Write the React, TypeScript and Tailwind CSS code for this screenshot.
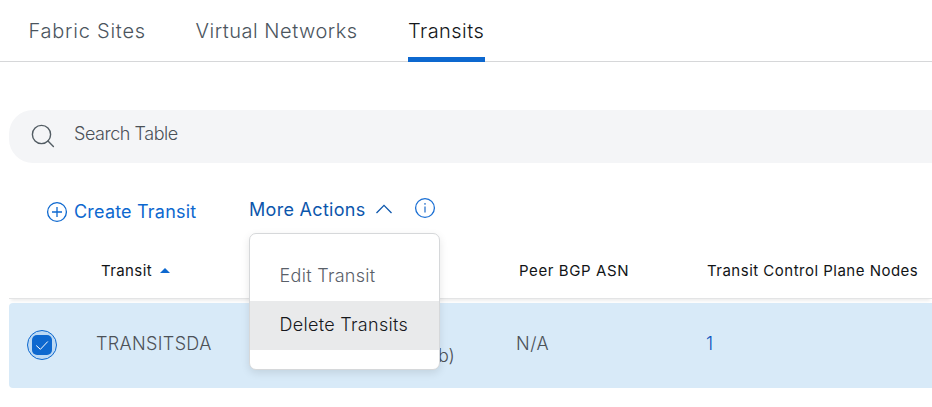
const columns = "grid grid-cols-[88px_421px_188px_1fr]";

function SearchIcon() {
  return (
    <svg className="h-[26px] w-[26px]" viewBox="0 0 26 26" fill="none" stroke="#525c63" strokeWidth="1.4">
      <circle cx="10.5" cy="10.5" r="9.1" />
      <path d="M17 17l5.4 5.4" strokeLinecap="round" />
    </svg>
  );
}

function PlusIcon() {
  return (
    <svg className="h-[22px] w-[22px]" viewBox="0 0 22 22" fill="none" stroke="#0d68cf" strokeWidth="1.3">
      <circle cx="11" cy="11" r="9.4" />
      <path d="M6 11h10M11 6v10" />
    </svg>
  );
}

function InfoIcon() {
  return (
    <svg className="mb-[3px] h-[22px] w-[22px]" viewBox="0 0 22 22" fill="none" stroke="#1a6fd4" strokeWidth="1.3">
      <circle cx="11" cy="11" r="9.4" />
      <path d="M11 9.4v6" stroke="#5f95d8" strokeWidth="1.7" />
      <path d="M11 5.9v1.9" stroke="#5f95d8" strokeWidth="1.7" />
    </svg>
  );
}

function ActionsMenu() {
  return (
    <div className="absolute left-0 top-[47px] z-10 h-[137px] w-[191px] rounded-[7px] border border-[#d6d8da] bg-white pt-[18px] text-lg font-[350] shadow-[0_3px_8px_rgba(0,0,0,0.10)]">
      <div className="flex h-[49px] items-center pb-0.5 pl-[29.5px] tracking-[0.3px] text-[#596069]">Edit Transit</div>
      <div className="flex h-[49px] items-center bg-[#e9eaeb] pb-0.5 pl-[29.5px] tracking-[0.3px] text-[#16181c]">Delete Transits</div>
    </div>
  );
}

export default function App() {
  return (
    <div className="h-[407px] w-full overflow-hidden whitespace-nowrap bg-white font-['Inter',sans-serif]">
      <nav className="flex h-[62px] border-b border-[#d6d7d9] pl-[28px] text-xl font-[340] text-[#4b555e]">
        <div className="w-[167px] pl-[0.5px] pt-[17px] tracking-[0.76px]">Fabric Sites</div>
        <div className="w-[213px] pl-[0.5px] pt-[17px] tracking-[0.52px]">Virtual Networks</div>
        <div className="h-[62px] w-[77px] border-b-5 border-[#0d68cf] pt-[17px] tracking-[0.45px] text-[#14171a]">Transits</div>
      </nav>

      <div className="ml-[9px] mt-12 flex h-[53px] items-center rounded-l-[24px] bg-[#f4f5f7] pl-[22px]">
        <SearchIcon />
        <span className="ml-[17px] pb-[5px] text-lg font-[340] tracking-[-0.45px] text-[#4b5157]">Search Table</span>
      </div>

      <div className="flex h-[79px] items-start pl-[46px] pt-[23px] text-lg">
        <button className="flex w-[203px] items-center pt-[13px] leading-[26px] text-[#0d68cf]">
          <PlusIcon />
          <span className="ml-1.5 tracking-[0.2px]">Create Transit</span>
        </button>
        <div className="relative flex h-[47px] items-center text-[#0c56ac]">
          <button className="flex w-[165px] items-center">
            <span className="w-[117px] text-left tracking-[0.3px]">More Actions</span>
            <svg className="mb-0.5 ml-[9px] h-[10px] w-[18px]" viewBox="0 0 18 10" fill="none" stroke="currentColor" strokeWidth="1.3">
              <path d="M1.5 9L9 1.4l7.5 7.6" />
            </svg>
          </button>
          <InfoIcon />
          <ActionsMenu />
        </div>
      </div>

      <div className={`${columns} ml-[9px] h-[57px] items-center border-b border-[#e3e4e5] pt-[3px] text-[15px] text-[#111417] shadow-[0_4px_3px_-2px_rgba(0,0,0,0.07)]`}>
        <span />
        <span className="flex items-center gap-2 pl-1 tracking-[0.4px]">
          Transit
          <svg className="mb-[3px] h-[5px] w-[10px]" viewBox="0 0 10 5" fill="#0d68cf">
            <path d="M0 5L5 0l5 5z" />
          </svg>
        </span>
        <span className="pl-px tracking-[0.6px]">Peer BGP ASN</span>
        <span className="pl-px tracking-[0.49px]">Transit Control Plane Nodes</span>
      </div>

      <div className={`${columns} ml-[9px] mt-1 h-[85px] items-center rounded-l-[4px] bg-[#d8eaf8] text-lg font-[350] text-[#4c5157]`}>
        <span className="mb-px ml-[18px] flex h-[30px] w-[30px] items-center justify-center rounded-full border border-[#0d68cf] bg-[#bcd9f4]">
          <span className="flex h-5 w-5 items-center justify-center rounded-[5px] bg-[#0d68cf]">
            <svg className="h-3 w-3.5" viewBox="0 0 14 12" fill="none" stroke="white" strokeWidth="1">
              <path d="M1.2 6.5l4.2 3.8L12.8 2.5" />
            </svg>
          </span>
        </span>
        <span className="flex items-center pb-1">
          <span className="-ml-px w-[342px] tracking-[0.35px]">TRANSITSDA</span>
          <span className="mt-6 tracking-[-0.2px]">b)</span>
        </span>
        <span className="-ml-0.5 pb-1 tracking-[0.5px]">N/A</span>
        <span className="pb-1 text-[#0d52c0]">1</span>
      </div>
    </div>
  );
}
